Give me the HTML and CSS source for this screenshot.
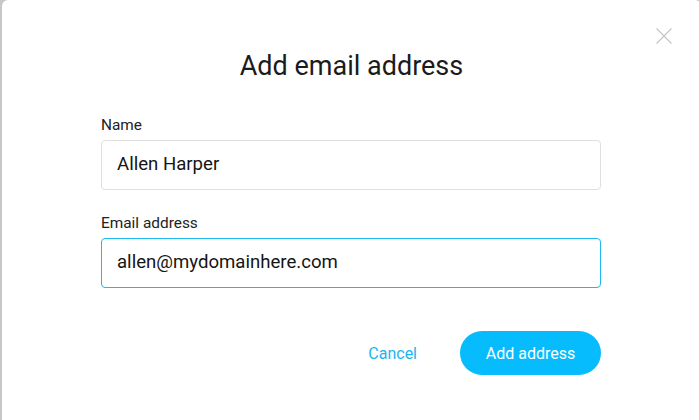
FILE: index.html
```html
<!DOCTYPE html>
<html lang="en">
<head>
<meta charset="utf-8">
<title>Add email address</title>
<link rel="stylesheet" href="styles.css">
</head>
<body>
<div class="modal">
  <button class="close" aria-label="Close">
    <svg width="16" height="16" viewBox="0 0 16 16"><path d="M0.5 0.5L15.5 15.5M15.5 0.5L0.5 15.5" stroke="#c4c4c4" stroke-width="1.1" fill="none"/></svg>
  </button>
  <h1 class="title">Add email address</h1>
  <form class="form">
    <label class="label" for="name">Name</label>
    <input class="field" id="name" type="text" value="Allen Harper">
    <label class="label label-second" for="email">Email address</label>
    <input class="field field-focus" id="email" type="text" value="allen@mydomainhere.com">
    <div class="actions">
      <button type="button" class="cancel">Cancel</button>
      <button type="button" class="primary">Add address</button>
    </div>
  </form>
</div>
</body>
</html>
```
FILE: styles.css
```css
html, body {
  margin: 0;
  padding: 0;
  height: 100%;
  overflow: hidden;
}
body {
  background: #c6c7c9;
  font-family: Roboto, "Liberation Sans", sans-serif;
}
.modal {
  position: relative;
  margin-left: 2px;
  width: 699px;
  height: 440px;
  background: #ffffff;
  border-radius: 6px;
  box-sizing: border-box;
  padding-top: 50px;
}
.close {
  position: absolute;
  top: 28px;
  right: 29px;
  width: 16px;
  height: 16px;
  padding: 0;
  border: 0;
  background: none;
  display: block;
}
.close svg { display: block; }
.title {
  margin: 0;
  text-align: center;
  font-size: 27px;
  line-height: 32px;
  font-weight: 400;
  color: #1b1b1b;
}
.form {
  width: 500px;
  margin: 33px 0 0 99px;
  display: flex;
  flex-direction: column;
}
.label {
  font-size: 15.4px;
  line-height: 20px;
  color: #222;
  margin-bottom: 5px;
}
.label-second {
  margin-top: 23px;
}
.field {
  box-sizing: border-box;
  height: 50px;
  width: 500px;
  margin: 0;
  padding: 0 15px 3px;
  border: 1px solid #dfdfdf;
  border-radius: 4px;
  font-family: Roboto, "Liberation Sans", sans-serif;
  font-size: 18.6px;
  color: #151515;
  background: #fff;
  outline: none;
}
.field-focus {
  border-color: #1fb9f2;
}
.actions {
  display: flex;
  justify-content: flex-end;
  align-items: center;
  margin-top: 43px;
  gap: 43px;
}
.cancel {
  border: 0;
  background: none;
  padding: 0;
  font-family: Roboto, "Liberation Sans", sans-serif;
  font-size: 16px;
  color: #1ab5f2;
}
.primary {
  width: 141px;
  height: 44px;
  border: 0;
  border-radius: 22px;
  background: #06bcfd;
  color: #fff;
  font-family: Roboto, "Liberation Sans", sans-serif;
  font-size: 16px;
  padding: 0;
}
```
